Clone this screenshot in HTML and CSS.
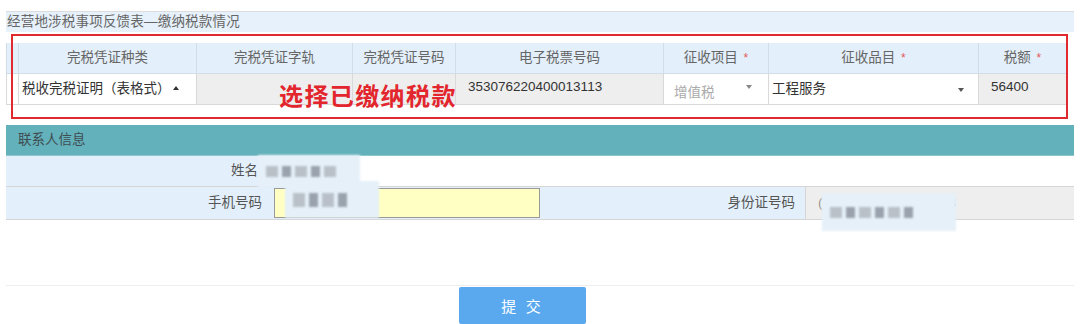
FILE: index.html
```html
<!DOCTYPE html>
<html lang="zh-CN">
<head>
    <meta charset="UTF-8">
    <title>经营地涉税事项反馈表</title>
    <link rel="stylesheet" href="styles.css">
</head>
<body>
    <div class="page">
        <div class="panel">
            <div class="panel-title">经营地涉税事项反馈表—缴纳税款情况</div>
            <div class="tax-wrap">
                <table class="tax-table">
                    <colgroup>
                        <col style="width:12px"><col style="width:178px"><col style="width:156px"><col style="width:103px">
                        <col style="width:208px"><col style="width:105px"><col style="width:210px"><col style="width:88px">
                    </colgroup>
                    <thead>
                        <tr>
                            <th></th>
                            <th>完税凭证种类</th>
                            <th>完税凭证字轨</th>
                            <th>完税凭证号码</th>
                            <th>电子税票号码</th>
                            <th>征收项目 <span class="req">*</span></th>
                            <th>征收品目 <span class="req">*</span></th>
                            <th>税额 <span class="req">*</span></th>
                        </tr>
                    </thead>
                    <tbody>
                        <tr>
                            <td class="blank"></td>
                            <td class="select">税收完税证明（表格式）<span class="caret-up"></span></td>
                            <td></td>
                            <td></td>
                            <td class="num"><span class="lift">353076220400013113</span></td>
                            <td class="select placeholder"><span class="drop">增值税</span><span class="caret-down"></span></td>
                            <td class="select">工程服务<span class="caret-down"></span></td>
                            <td class="num"><span class="lift">56400</span></td>
                        </tr>
                    </tbody>
                </table>
                <div class="mark-box"></div>
                <div class="mark-text">选择已缴纳税款</div>
            </div>
        </div>

        <div class="contact">
            <div class="contact-title">联系人信息</div>
            <div class="contact-row row-name">
                <div class="label">姓名</div>
                <div class="value"></div>
                <div class="blur blur-name"><i></i><i></i><i></i><i></i><i></i></div>
            </div>
            <div class="contact-row row-phone">
                <div class="label">手机号码</div>
                <div class="input-cell"><div class="phone-input"></div></div>
                <div class="label id-label">身份证号码</div>
                <div class="id-value"><span>(</span><span class="tail">3</span></div>
                <div class="blur blur-phone"><i></i><i></i><i></i><i></i></div>
                <div class="blur blur-id"><i></i><i></i><i></i><i></i><i></i><i></i></div>
            </div>
        </div>

        <div class="actions">
            <button class="btn-submit">提 交</button>
        </div>
    </div>
</body>
</html>
```

FILE: styles.css
```css
body {
    margin: 0;
    font-family: "Liberation Sans", "Noto Sans CJK SC", sans-serif;
    font-size: 13.5px;
    line-height: 20px;
    color: #333;
    background: #fff;
}
.page {
    width: 1068px;
    padding: 11px 6px 0 6px;
}
.panel {
    border-top: 1px solid #dcdcdc;
}
.panel-title {
    height: 20px;
    line-height: 20px;
    padding-left: 1px;
    background: #e6f1fb;
    color: #666;
    letter-spacing: 0.2px;
}
.tax-wrap {
    position: relative;
    margin-top: 11px;
    width: 1060px;
    height: 63px;
}
.tax-table {
    width: 1060px;
    table-layout: fixed;
    border-collapse: collapse;
}
.tax-table th {
    height: 30px;
    padding: 0;
    background: #e3effa;
    border: 1px solid #d3dde7;
    border-top: none;
    font-weight: normal;
    color: #666;
    text-align: center;
    line-height: 30px;
}
.tax-table th .req {
    color: #e35a5a;
    font-size: 12px;
    margin-left: 2px;
}
.tax-table td {
    height: 30px;
    padding: 0 6px;
    line-height: 30px;
    background: #eeeeee;
    border: 1px solid #d9d9d9;
    white-space: nowrap;
    overflow: hidden;
}
.tax-table td.blank {
    background: #fff;
}
.tax-table td.select {
    position: relative;
    background: #fff;
    padding-left: 3px;
}
.tax-table td.placeholder {
    color: #aaa;
    padding-left: 10px;
}
.tax-table td.num {
    padding-left: 12px;
}
.lift {
    position: relative;
    top: -2px;
}
.drop {
    position: relative;
    top: 4px;
}
.caret-up, .caret-down {
    position: absolute;
    right: 14px;
    top: 14px;
    width: 0;
    height: 0;
    border-left: 3.5px solid transparent;
    border-right: 3.5px solid transparent;
}
.caret-up {
    right: 17px;
    top: 12px;
    border-bottom: 4px solid #333;
}
.caret-down {
    border-top: 4px solid #555;
}
.placeholder .caret-down {
    right: 16px;
    top: 11px;
    border-top-color: #888;
}
.mark-box {
    position: absolute;
    left: 5px;
    top: -9px;
    width: 1053px;
    height: 81px;
    border: 2px solid #e02a2f;
}
.mark-text {
    position: absolute;
    left: 273px;
    top: 39px;
    font-size: 24px;
    line-height: 30px;
    font-weight: bold;
    letter-spacing: 1.4px;
    color: #e3262d;
}
.contact {
    margin-top: 19px;
}
.contact-title {
    height: 30px;
    line-height: 30px;
    padding-left: 12px;
    background: #63b1bb;
    border-bottom: 1px solid #8fc6cd;
    color: #3f4d52;
}
.contact-row {
    position: relative;
    display: flex;
    border-bottom: 1px solid #d6d6d6;
}
.row-name {
    height: 30px;
}
.row-phone {
    height: 32px;
    background: #e3f0fb;
}
.contact-row .label {
    width: 252px;
    padding-right: 8px;
    background: #e3f0fb;
    color: #555;
    text-align: right;
    line-height: 30px;
}
.row-phone .label {
    width: 256px;
    line-height: 32px;
}
.contact-row .value {
    flex: 1;
    background: #fff;
}
.input-cell {
    width: 274px;
    padding: 1px 0 0 4px;
}
.phone-input {
    width: 264px;
    height: 28px;
    background: #ffffc4;
    border: 1px solid #999;
}
.row-phone .id-label {
    width: 247px;
    padding-right: 10px;
}
.id-value {
    flex: 1;
    display: flex;
    justify-content: space-between;
    padding: 0 118px 0 12px;
    background: #eeeeee;
    border-left: 1px solid #d6d6d6;
    color: #999;
    line-height: 32px;
}
.blur {
    position: absolute;
    display: flex;
    gap: 4px;
    align-items: center;
    padding: 0 8px;
    background: #e5f0f9;
    filter: blur(1px);
}
.blur i {
    display: block;
    width: 12px;
    height: 11px;
    background: #b9c0c8;
}
.blur i:nth-child(2n) {
    background: #9aa3ad;
    width: 9px;
}
.blur-name {
    left: 252px;
    top: -1px;
    width: 86px;
    height: 33px;
}
.blur-phone {
    left: 279px;
    top: -6px;
    width: 78px;
    height: 37px;
}
.blur-phone i {
    height: 14px;
}
.blur-id {
    left: 816px;
    top: 6px;
    width: 118px;
    height: 38px;
}
.actions {
    margin-top: 65px;
    border-top: 1px solid #eeeeee;
    padding-top: 1px;
}
.btn-submit {
    width: 127px;
    height: 37px;
    margin-left: 453px;
    border: none;
    border-radius: 2px;
    background: #5aa9ef;
    color: #fff;
    font-family: "Noto Sans CJK SC", sans-serif;
    font-size: 15px;
    letter-spacing: 3px;
    cursor: pointer;
}
```
